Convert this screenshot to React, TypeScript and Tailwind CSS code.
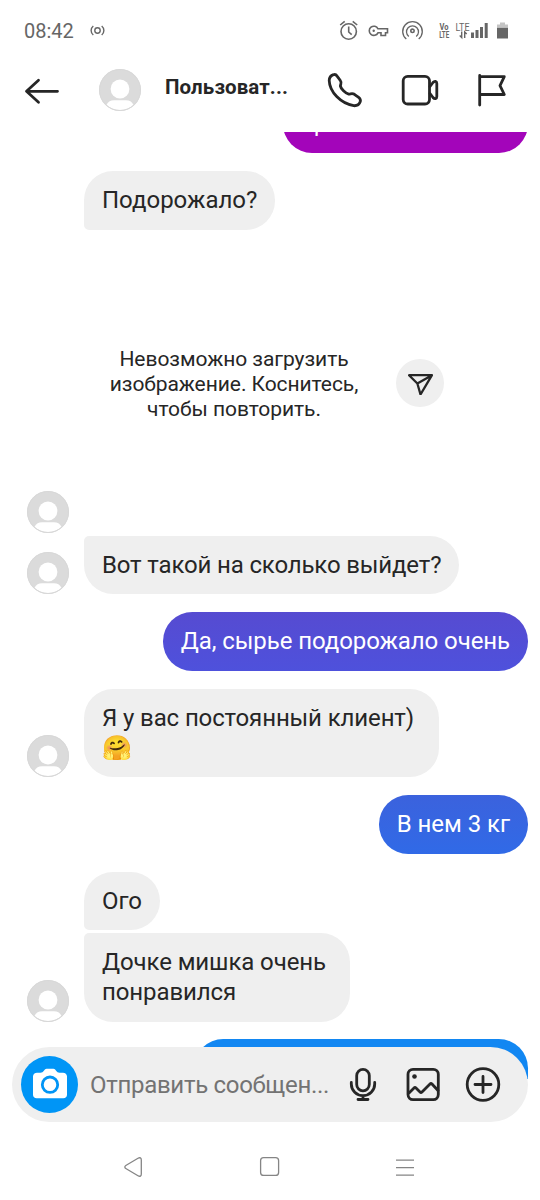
import type { ReactNode } from "react";

function Avatar() {
  return (
    <svg className="block size-[42px] shrink-0" viewBox="0 0 42 42">
      <circle cx="21" cy="21" r="21" fill="#dbdbdb" />
      <circle cx="21" cy="20" r="9.4" fill="#fff" />
      <path d="M7.500 35.800c1.800-3.200 4-4.600 7.500-4.600h12c3.500 0 5.700 1.400 7.500 4.600A20 20 0 0 1 7.500 35.800Z" fill="#fff" />
      <circle cx="21" cy="21" r="20.500" fill="none" stroke="#d8d8d8" />
    </svg>
  );
}

function StatusBar() {
  return (
    <div className="flex h-[60px] shrink-0 items-center pt-px pl-6 text-[#666]">
      <span className="w-[66px] text-[20px] leading-6">08:42</span>
      <svg className="h-4 w-4" viewBox="0 0 16 16" fill="none" stroke="currentColor" strokeWidth="1.4">
        <circle cx="7.500" cy="7.500" r="2.700" />
        <path d="M3.300 3C.4 5.500.4 9.500 3.300 12M11.700 3c2.900 2.500 2.900 6.500 0 9" />
      </svg>
      <svg className="ml-[232px] h-6 w-[172px]" viewBox="338 18.500 172 24" fill="none" stroke="currentColor" strokeWidth="1.600">
        <circle cx="348.700" cy="31" r="7.700" />
        <path d="M348.700 26v5.500l3 2.700M340.200 24.500l4.500-3.700M357.200 24.500l-4.500-3.700" />
        <path d="M378 28.300a4.600 4.600 0 1 0 0 4h3v2.700h4.500v-2.700h2v-4Z" />
        <circle cx="373.700" cy="30.300" r="1.200" fill="currentColor" stroke="none" />
        <circle cx="412.500" cy="30.300" r="1.700" />
        <path d="M408.800 36a6 6 0 1 1 7.400 0M406.300 38.600a9.800 9.800 0 1 1 12.400 0" strokeWidth="1.300" />
        <g fill="currentColor" stroke="none" fontFamily="Roboto, sans-serif">
          <text x="439.500" y="29.300" fontSize="8.500" fontWeight="700" textLength="9" lengthAdjust="spacingAndGlyphs">Vo</text>
          <text x="439.200" y="37.500" fontSize="8.500" fontWeight="700" textLength="10" lengthAdjust="spacingAndGlyphs">LTE</text>
          <text x="455.500" y="30" fontSize="10" textLength="14" lengthAdjust="spacingAndGlyphs">LTE</text>
          <path d="M471 32h3v5.500h-3ZM475.500 29.500h3v8h-3ZM480 26.500h3v11h-3ZM484.700 22.500h3v15h-3Z" />
          <path d="M497 27h11v11h-11Z" />
          <path d="M500 22h5v2h3v3h-11v-3h3Z" fill="#c4c4c4" />
        </g>
        <path d="M461.700 31v6l-2-2M464.700 37.500V31.500l2 2" strokeWidth="1.400" />
      </svg>
    </div>
  );
}

function Header() {
  return (
    <header className="flex h-[72px] shrink-0 items-center text-[#262626]">
      <svg className="-mt-[10px] ml-6 h-9 w-9" viewBox="24 73 36 36" fill="none" stroke="currentColor" strokeWidth="2.800" strokeLinecap="round" strokeLinejoin="round">
        <path d="M57.500 91.300h-31M38.500 80.300l-12 11 12 11" />
      </svg>
      <div className="-mt-3 ml-[39px]">
        <Avatar />
      </div>
      <h1 className="-mt-[18px] ml-6 w-[140px] text-[20.5px] leading-7 font-bold tracking-[0.1px]">Пользоват...</h1>
      <svg className="-mt-3 ml-4 h-10 w-[190px]" viewBox="321 70 190 40" fill="none" stroke="currentColor" strokeWidth="2.800" strokeLinecap="round" strokeLinejoin="round">
        <path d="M333.500 74.700c-2.700.9-4.200 3-4.300 5.800.4 11.500 11.500 23 24.500 25.200 3 .2 5.700-1.500 6.600-4.200.5-1.700-.4-3.100-1.700-4.200l-4.200-3c-2.500-1.500-4.200.1-5.700-.2-3.500-.9-7.700-5.200-8.300-8 0-1.500 1.700-3.200.1-5.300l-3.400-4.700c-.8-1.200-2.100-2-3.600-1.400Z" />
        <rect x="403.200" y="76.300" width="26.300" height="27.700" rx="4.500" />
        <path d="m430 86.500 3-4c1.700-2 3.800-1.400 3.800 1v13c0 2.400-2.100 3-3.800 1l-3-4" />
        <path d="M479.700 75.500v29.500M479.700 76.700h24.600l-4.300 8.900 4.300 8.900h-24.600" />
      </svg>
    </header>
  );
}

function Incoming({ children, shape, avatar = false }: { children: ReactNode; shape: string; avatar?: boolean }) {
  return (
    <div className="flex items-end">
      <div className="ml-[27px] w-[57px]">{avatar && <Avatar />}</div>
      <div className={`bg-[#efefef] px-[18px] py-[14.25px] text-[24px] leading-[30px] whitespace-nowrap ${shape}`}>{children}</div>
    </div>
  );
}

function Outgoing({ children, tone }: { children: ReactNode; tone: string }) {
  return (
    <div className="flex justify-end pr-3">
      <div className={`px-[18px] py-[14.25px] text-[24px] leading-[30px] whitespace-nowrap text-white ${tone}`}>{children}</div>
    </div>
  );
}

function Conversation() {
  return (
    <main className="flex h-[990px] shrink-0 flex-col overflow-hidden text-[#262626]">
      <div className="-mt-[37.5px]">
        <Outgoing tone="rounded-[29.25px] bg-[#a305ba] w-[245px]">Цена 850 за 500 г</Outgoing>
      </div>
      <div className="mt-[18px]">
        <Incoming shape="rounded-[29px] rounded-bl-[5px]">Подорожало?</Incoming>
      </div>
      <div className="mt-[117.5px] flex items-center pl-[84px]">
        <p className="w-[300px] text-center text-[21px] leading-[25px] tracking-[-0.06px]">
          Невозможно загрузить<br />изображение. Коснитесь,<br />чтобы повторить.
        </p>
        <span className="-mt-1 ml-3 flex size-12 items-center justify-center rounded-full bg-[#efefef]">
          <svg className="size-[25px]" viewBox="0 0 24 24" fill="none" stroke="currentColor" strokeWidth="2.200" strokeLinejoin="round">
            <path d="M1 5h22L12 23.500 9 13ZM9 13 23 5" />
          </svg>
        </span>
      </div>
      <div className="mt-[68.5px] ml-[27px]">
        <Avatar />
      </div>
      <div className="mt-[3px]">
        <Incoming avatar shape="rounded-[29px] rounded-tl-[5px] tracking-[-0.15px]">Вот такой на сколько выйдет?</Incoming>
      </div>
      <div className="mt-[18px]">
        <Outgoing tone="rounded-[29.25px] bg-linear-to-b from-[#564bd1] to-[#4e51dc] tracking-[-0.08px]">Да, сырье подорожало очень</Outgoing>
      </div>
      <div className="mt-[18px]">
        <Incoming avatar shape="rounded-[29px] w-[355px] tracking-[-0.12px]">
          Я у вас постоянный клиент)<br />🤗
        </Incoming>
      </div>
      <div className="mt-[18px]">
        <Outgoing tone="rounded-[29.25px] bg-linear-to-b from-[#3b62dd] to-[#306ae7] tracking-[-0.05px]">В нем 3 кг</Outgoing>
      </div>
      <div className="mt-[18px]">
        <Incoming shape="rounded-[29px] rounded-bl-[5px]">Ого</Incoming>
      </div>
      <div className="mt-[3px]">
        <Incoming avatar shape="rounded-[29px] rounded-tl-[5px] w-[266px] tracking-[-0.1px]">
          Дочке мишка очень<br />понравился
        </Incoming>
      </div>
      <div className="mt-[17.5px]">
        <Outgoing tone="rounded-t-[29.25px] bg-[#1287f2] h-[40px] w-[334px]">{null}</Outgoing>
      </div>
    </main>
  );
}

function Composer() {
  return (
    <div className="relative mx-3 -mt-[75px] flex h-[75px] shrink-0 items-center rounded-[37.5px] bg-[#efefef] pl-[9px] text-[#262626]">
      <span className="flex size-[57px] items-center justify-center rounded-full bg-[#0095f6]">
        <svg className="size-9" viewBox="0 1.800 36 36">
          <path d="M5 7.500h3.500c1.500 0 2.500-.8 3.400-2l1-1.200c.5-.6 1-.8 1.700-.8h6.800c.7 0 1.200.2 1.700.8l1 1.200c.9 1.200 1.900 2 3.400 2H31c2.200 0 4 1.500 4 3.700v18.300c0 2.200-1.500 3.500-3.700 3.500H4.700C2.500 33 1 31.700 1 29.500V11.200c0-2.200 1.800-3.700 4-3.700Z" fill="#fff" />
          <circle cx="18" cy="19.500" r="7.700" fill="none" stroke="#0095f6" strokeWidth="2.800" />
        </svg>
      </span>
      <span className="ml-3 w-[256px] text-[24px] leading-[30px] tracking-[-0.3px] whitespace-nowrap text-[#737373]">Отправить сообщен...</span>
      <svg className="h-10 w-[160px]" viewBox="346 1065 160 40" fill="none" stroke="currentColor" strokeWidth="2.800" strokeLinecap="round" strokeLinejoin="round">
        <rect x="356.700" y="1069.300" width="12.600" height="21.500" rx="6.300" />
        <path d="M351.300 1082.500v1.500a11.700 11.700 0 0 0 23.400 0v-1.500M363 1096v3M358 1099.500h10" />
        <rect x="408" y="1069.300" width="30.300" height="30.300" rx="5" />
        <circle cx="414.500" cy="1076.500" r="2.300" fill="currentColor" stroke="none" />
        <path d="m409 1093 5-5c.7-.7 1.300-.7 2 0l4 4c.7.7 1.300.7 2 0l8-8c.7-.7 1.300-.7 2 0l6 6.500" />
        <circle cx="483" cy="1084.500" r="15.800" />
        <path d="M475 1084.500h16M483 1076.500v16" />
      </svg>
    </div>
  );
}

function NavigationBar() {
  return (
    <nav className="flex h-[78px] shrink-0 items-center justify-center pt-3 text-[#858585]">
      <svg className="h-6 w-[300px]" viewBox="120 1155 300 24" fill="none" stroke="currentColor" strokeWidth="1.300" strokeLinejoin="round">
        <path d="M125.800 1165.500 138 1158.300c2-1.200 3.300-.4 3.300 1.700v14c0 2.100-1.300 2.900-3.300 1.700l-12.200-7.200c-1.300-.8-1.300-2.200 0-3Z" />
        <rect x="260.600" y="1157.600" width="18" height="17.800" rx="3" />
        <path d="M396 1160.200h18M396 1167.700h18M396 1175.200h18" />
      </svg>
    </nav>
  );
}

export default function App() {
  return (
    <div className="flex h-[1200px] w-[540px] flex-col overflow-hidden bg-white font-[Roboto,sans-serif]">
      <StatusBar />
      <Header />
      <Conversation />
      <Composer />
      <NavigationBar />
    </div>
  );
}
